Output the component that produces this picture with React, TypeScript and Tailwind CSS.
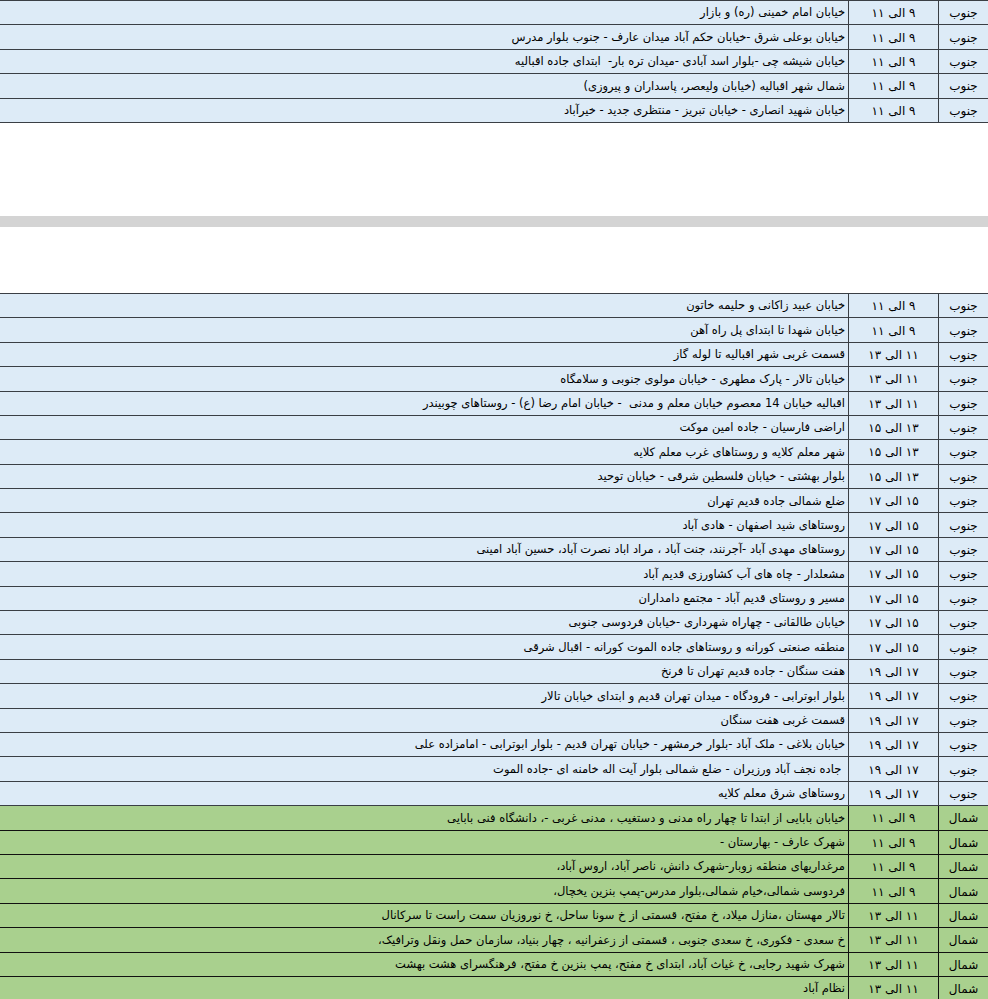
type Row = { area: string; time: string; place: string };

const topRows: Row[] = [
  { area: 'جنوب', time: '۹ الی ۱۱', place: 'خیابان امام خمینی (ره) و بازار' },
  { area: 'جنوب', time: '۹ الی ۱۱', place: 'خیابان بوعلی شرق -خیابان حکم آباد میدان عارف - جنوب بلوار مدرس' },
  { area: 'جنوب', time: '۹ الی ۱۱', place: 'خیابان شیشه چی -بلوار اسد آبادی -میدان تره بار-  ابتدای جاده اقبالیه' },
  { area: 'جنوب', time: '۹ الی ۱۱', place: 'شمال شهر اقبالیه (خیابان ولیعصر، پاسداران و پیروزی)' },
  { area: 'جنوب', time: '۹ الی ۱۱', place: 'خیابان شهید انصاری - خیابان تبریز - منتظری جدید - خیرآباد' },
];

const southRows: Row[] = [
  { area: 'جنوب', time: '۹ الی ۱۱', place: 'خیابان عبید زاکانی و حلیمه خاتون' },
  { area: 'جنوب', time: '۹ الی ۱۱', place: 'خیابان شهدا تا ابتدای پل راه آهن' },
  { area: 'جنوب', time: '۱۱ الی ۱۳', place: 'قسمت غربی شهر اقبالیه تا لوله گاز' },
  { area: 'جنوب', time: '۱۱ الی ۱۳', place: 'خیابان تالار - پارک مطهری - خیابان مولوی جنوبی و سلامگاه' },
  { area: 'جنوب', time: '۱۱ الی ۱۳', place: 'اقبالیه خیابان 14 معصوم خیابان معلم و مدنی  - خیابان امام رضا (ع) - روستاهای چوبیندر' },
  { area: 'جنوب', time: '۱۳ الی ۱۵', place: 'اراضی فارسیان - جاده امین موکت' },
  { area: 'جنوب', time: '۱۳ الی ۱۵', place: 'شهر معلم کلایه و روستاهای غرب معلم کلایه' },
  { area: 'جنوب', time: '۱۳ الی ۱۵', place: 'بلوار بهشتی - خیابان فلسطین شرقی - خیابان توحید' },
  { area: 'جنوب', time: '۱۵ الی ۱۷', place: 'ضلع شمالی جاده قدیم تهران' },
  { area: 'جنوب', time: '۱۵ الی ۱۷', place: 'روستاهای شید اصفهان - هادی آباد' },
  { area: 'جنوب', time: '۱۵ الی ۱۷', place: 'روستاهای مهدی آباد -آجرنند، جنت آباد ، مراد اباد نصرت آباد، حسین آباد امینی' },
  { area: 'جنوب', time: '۱۵ الی ۱۷', place: 'مشعلدار - چاه های آب کشاورزی قدیم آباد' },
  { area: 'جنوب', time: '۱۵ الی ۱۷', place: 'مسیر و روستای قدیم آباد - مجتمع دامداران' },
  { area: 'جنوب', time: '۱۵ الی ۱۷', place: 'خیابان طالقانی - چهاراه شهرداری -خیابان فردوسی جنوبی' },
  { area: 'جنوب', time: '۱۵ الی ۱۷', place: 'منطقه صنعتی کورانه و روستاهای جاده الموت کورانه - اقبال شرقی' },
  { area: 'جنوب', time: '۱۷ الی ۱۹', place: 'هفت سنگان - جاده قدیم تهران تا فرنخ' },
  { area: 'جنوب', time: '۱۷ الی ۱۹', place: 'بلوار ابوترابی - فرودگاه - میدان تهران قدیم و ابتدای خیابان تالار' },
  { area: 'جنوب', time: '۱۷ الی ۱۹', place: 'قسمت غربی هفت سنگان' },
  { area: 'جنوب', time: '۱۷ الی ۱۹', place: 'خیابان بلاغی - ملک آباد -بلوار خرمشهر - خیابان تهران قدیم - بلوار ابوترابی - امامزاده علی' },
  { area: 'جنوب', time: '۱۷ الی ۱۹', place: ' جاده نجف آباد ورزیران - ضلع شمالی بلوار آیت اله خامنه ای -جاده الموت' },
  { area: 'جنوب', time: '۱۷ الی ۱۹', place: 'روستاهای شرق معلم کلایه' },
];

const northRows: Row[] = [
  { area: 'شمال', time: '۹ الی ۱۱', place: 'خیابان بابایی از ابتدا تا چهار راه مدنی و دستغیب ، مدنی غربی -، دانشگاه فنی بابایی' },
  { area: 'شمال', time: '۹ الی ۱۱', place: 'شهرک عارف - بهارستان -' },
  { area: 'شمال', time: '۹ الی ۱۱', place: 'مرغداریهای منطقه زوبار-شهرک دانش، ناصر آباد، اروس آباد،' },
  { area: 'شمال', time: '۹ الی ۱۱', place: 'فردوسی شمالی،خیام شمالی،بلوار مدرس-پمپ بنزین یخچال،' },
  { area: 'شمال', time: '۱۱ الی ۱۳', place: 'تالار مهستان ،منازل میلاد، خ مفتح، قسمتی از خ سونا ساحل، خ نوروزیان سمت راست تا سرکانال' },
  { area: 'شمال', time: '۱۱ الی ۱۳', place: 'خ سعدی - فکوری، خ سعدی جنوبی ، قسمتی از زعفرانیه ، چهار بنیاد، سازمان حمل ونقل وترافیک،' },
  { area: 'شمال', time: '۱۱ الی ۱۳', place: 'شهرک شهید رجایی، خ غیاث آباد، ابتدای خ مفتح، پمپ بنزین خ مفتح، فرهنگسرای هشت بهشت' },
  { area: 'شمال', time: '۱۱ الی ۱۳', place: 'نظام آباد' },
];

const TableRow = ({ row, green }: { row: Row; green?: boolean }) => (
  <div
    className={
      green
        ? 'grid grid-cols-[50px_90px_1fr] h-[24.4px] border-b border-[#111] bg-[#a9d08e]'
        : 'grid grid-cols-[50px_90px_1fr] h-[24.4px] border-b border-[#3a3f45] bg-[#ddebf7]'
    }
  >
    <div className={green ? 'flex items-center justify-center pt-px border-l border-[#111]' : 'flex items-center justify-center pt-px border-l border-[#3a3f45]'}>
      {row.area}
    </div>
    <div className={green ? 'flex items-center justify-center pt-px border-l border-[#111]' : 'flex items-center justify-center pt-px border-l border-[#3a3f45]'}>
      {row.time}
    </div>
    <div className="flex items-center pr-[3px] pt-px text-[11.5px] whitespace-pre overflow-hidden">{row.place}</div>
  </div>
);

export default function App() {
  return (
    <div dir="rtl" className="w-[988px] h-[999px] overflow-hidden bg-white text-black text-[12px] leading-none font-['DejaVu_Sans',sans-serif]">
      <div className="border-t border-[#3a3f45]">
        {topRows.map((r, i) => (
          <TableRow key={i} row={r} />
        ))}
      </div>
      <div className="h-[93px]" />
      <div className="h-[11px] bg-[#d4d4d4]" />
      <div className="h-[66px]" />
      <div className="border-t border-[#3a3f45]">
        {southRows.map((r, i) => (
          <TableRow key={i} row={r} />
        ))}
        {northRows.map((r, i) => (
          <TableRow key={i} row={r} green />
        ))}
      </div>
    </div>
  );
}
